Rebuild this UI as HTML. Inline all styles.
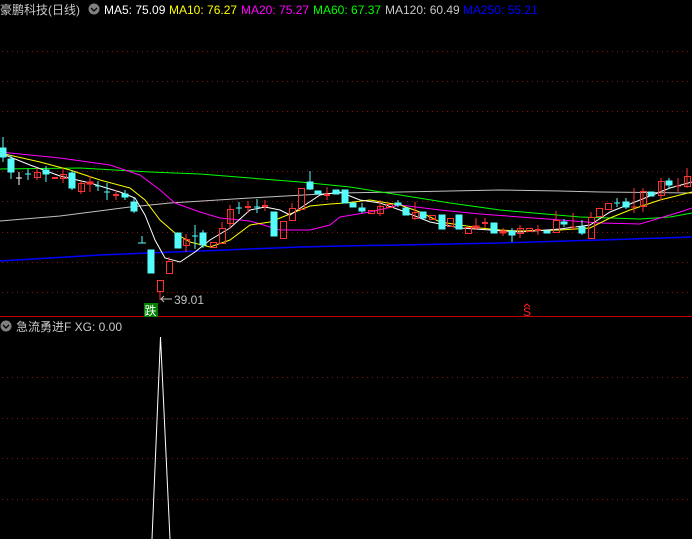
<!DOCTYPE html>
<html><head><meta charset="utf-8"><style>
html,body{margin:0;padding:0;background:#000;width:692px;height:539px;overflow:hidden}
svg{display:block}
text{font-family:"Liberation Sans","Noto Sans CJK SC",sans-serif;font-size:12px}
</style></head><body>
<svg width="692" height="539" xmlns="http://www.w3.org/2000/svg">
<rect width="692" height="539" fill="#000"/>
<g stroke="#8a1010" stroke-width="1" stroke-dasharray="1,4">
<line x1="2" y1="51.5" x2="692" y2="51.5"/><line x1="2" y1="81.5" x2="692" y2="81.5"/>
<line x1="2" y1="111.5" x2="692" y2="111.5"/><line x1="2" y1="141.5" x2="692" y2="141.5"/>
<line x1="2" y1="171.5" x2="692" y2="171.5"/><line x1="2" y1="201.5" x2="692" y2="201.5"/>
<line x1="2" y1="232.5" x2="692" y2="232.5"/><line x1="2" y1="262.5" x2="692" y2="262.5"/>
<line x1="2" y1="292.5" x2="692" y2="292.5"/>
<line x1="2" y1="377.5" x2="692" y2="377.5"/><line x1="2" y1="418.5" x2="692" y2="418.5"/>
<line x1="2" y1="458.5" x2="692" y2="458.5"/><line x1="2" y1="499.5" x2="692" y2="499.5"/>
</g>
<line x1="0" y1="316.5" x2="692" y2="316.5" stroke="#c00000" stroke-width="1"/>
<!-- MAs -->
<g fill="none" stroke-width="1">
<polyline stroke="#c0c0c0" points="0,221 60,216 130,207 170,203 250,198 340,193 400,192 500,190 560,191 600,192 692,193"/>
<polyline stroke="#0000ff" stroke-width="1.5" points="0,261 100,255 200,251 300,247 340,246 400,245 500,243 600,240 692,237"/>
<polyline stroke="#00ff00" points="0,169 80,168 150,172 200,174 300,182 350,187 400,195 450,203 500,210 580,217 640,219 670,217 692,213"/>
<polyline stroke="#ff00ff" points="0,152 60,158 110,165 140,175 160,190 175,203 200,212 220,218 250,221 280,230 310,230 330,225 340,217 370,212 400,205 440,210 480,214 520,217 560,220 600,223 640,224 660,218 680,212 692,208"/>
<polyline stroke="#ffff00" points="0,153 40,162 70,170 100,180 130,188 145,200 160,220 175,233 190,242 210,247 230,240 250,225 270,222 290,214 310,206 330,204 345,203 370,200 400,205 420,212 440,222 460,225 480,228 500,230 520,231 560,230 590,228 610,218 630,210 660,200 692,192"/>
<polyline stroke="#ffffff" points="0,153 30,165 60,176 90,183 120,192 135,198 145,215 155,240 165,258 180,262 195,252 210,240 230,228 250,210 265,207 280,210 290,215 305,205 320,195 340,192 360,200 380,203 400,210 430,222 460,228 490,230 520,232 560,229 590,225 610,212 640,200 670,188 692,182"/>
</g>
<!-- candles: cyan filled, red hollow -->
<g stroke="#54fcfc" fill="#54fcfc" stroke-width="1">
<line x1="3" y1="137" x2="3" y2="162"/><rect x="0" y="148" width="6" height="9"/>
<line x1="11" y1="155" x2="11" y2="179"/><rect x="8" y="159" width="6" height="13"/>
<line x1="28" y1="169" x2="28" y2="180"/><line x1="25" y1="174" x2="31" y2="174"/>
<line x1="46" y1="166" x2="46" y2="182"/><rect x="43" y="170" width="6" height="4"/>
<line x1="72" y1="170" x2="72" y2="190"/><rect x="69" y="173" width="6" height="15"/>
<line x1="98" y1="181" x2="98" y2="191"/><line x1="95" y1="186" x2="101" y2="186"/>
<line x1="107" y1="183" x2="107" y2="200"/><line x1="104" y1="192" x2="110" y2="192"/>
<line x1="125" y1="190" x2="125" y2="200"/><rect x="122" y="194" width="6" height="3"/>
<line x1="134" y1="198" x2="134" y2="213"/><rect x="131" y="202" width="6" height="9"/>
<line x1="142" y1="236" x2="142" y2="243"/><line x1="138" y1="243" x2="146" y2="243"/>
<rect x="148" y="250" width="6" height="23"/>
<rect x="175" y="233" width="6" height="15"/>
<line x1="195" y1="225" x2="195" y2="249"/><line x1="192" y1="236" x2="198" y2="236"/>
<line x1="203" y1="230" x2="203" y2="248"/><rect x="200" y="233" width="6" height="12"/>
<line x1="239" y1="202" x2="239" y2="214"/><line x1="236" y1="208" x2="242" y2="208"/>
<line x1="257" y1="199" x2="257" y2="213"/><line x1="254" y1="207" x2="260" y2="207"/>
<rect x="271" y="212" width="6" height="24"/>
<line x1="310" y1="171" x2="310" y2="190"/><rect x="307" y="182" width="6" height="7"/>
<rect x="315" y="191" width="6" height="3"/>
<rect x="333" y="190" width="6" height="4"/>
<rect x="342" y="190" width="6" height="13"/>
<rect x="350" y="203" width="6" height="4"/>
<line x1="362" y1="203" x2="362" y2="213"/><rect x="359" y="208" width="6" height="3"/>
<line x1="398" y1="200" x2="398" y2="207"/><rect x="395" y="203" width="6" height="2"/>
<rect x="403" y="208" width="6" height="7"/>
<rect x="420" y="212" width="6" height="6"/>
<rect x="439" y="215" width="6" height="14"/>
<rect x="456" y="215" width="6" height="14"/>
<rect x="491" y="223" width="6" height="10"/>
<line x1="512" y1="228" x2="512" y2="242"/><rect x="509" y="231" width="6" height="4"/>
<rect x="544" y="231" width="6" height="2"/>
<line x1="564" y1="219" x2="564" y2="227"/><rect x="561" y="222" width="6" height="2"/>
<line x1="582" y1="220" x2="582" y2="235"/><rect x="579" y="227" width="6" height="6"/>
<line x1="617" y1="198" x2="617" y2="207"/><line x1="614" y1="203" x2="620" y2="203"/>
<line x1="626" y1="198" x2="626" y2="209"/><rect x="623" y="202" width="6" height="5"/>
<rect x="648" y="192" width="6" height="4"/>
<line x1="669" y1="178" x2="669" y2="189"/><rect x="666" y="181" width="6" height="4"/>
</g>
<g stroke="#ff3232" fill="none" stroke-width="1">
<line x1="19" y1="172" x2="19" y2="185" stroke="#fff"/><line x1="16" y1="178" x2="22" y2="178" stroke="#fff"/>
<line x1="37" y1="168" x2="37" y2="180"/><rect x="34.5" y="172.5" width="6" height="5"/>
<line x1="52" y1="178" x2="58" y2="178" stroke-width="2"/>
<line x1="63" y1="168" x2="63" y2="183"/><rect x="60.5" y="174.5" width="6" height="4"/>
<line x1="81" y1="181" x2="81" y2="194"/><rect x="78.5" y="183.5" width="6" height="8"/>
<line x1="90" y1="176" x2="90" y2="192"/><rect x="87" y="182" width="6" height="2" fill="#ff3232"/>
<line x1="116" y1="190" x2="116" y2="200"/><line x1="113" y1="195" x2="119" y2="195" stroke-width="2"/>
<line x1="160" y1="291" x2="160" y2="300"/><rect x="157.5" y="280.5" width="6" height="11"/>
<line x1="169" y1="257" x2="169" y2="262"/><rect x="166.5" y="261.5" width="6" height="12"/>
<line x1="186" y1="234" x2="186" y2="252"/><rect x="183.5" y="239.5" width="6" height="6"/>
<rect x="210.5" y="242.5" width="6" height="5"/>
<line x1="222" y1="222" x2="222" y2="228"/><rect x="219.5" y="228.5" width="6" height="15"/>
<line x1="230" y1="205" x2="230" y2="229"/><rect x="227.5" y="209.5" width="6" height="14"/>
<line x1="248" y1="201" x2="248" y2="213"/><line x1="245" y1="207" x2="251" y2="207" stroke-width="2"/>
<line x1="265" y1="200" x2="265" y2="211"/><line x1="262" y1="206" x2="268" y2="206" stroke-width="2"/>
<rect x="280.5" y="221.5" width="6" height="17"/>
<line x1="292" y1="203" x2="292" y2="208"/><rect x="289.5" y="208.5" width="6" height="12"/>
<rect x="298.5" y="188.5" width="6" height="21"/>
<line x1="327" y1="187" x2="327" y2="200"/><line x1="324" y1="195" x2="330" y2="195" stroke-width="2"/>
<rect x="368.5" y="210.5" width="6" height="3"/>
<line x1="380" y1="200" x2="380" y2="216"/><rect x="377.5" y="206.5" width="6" height="7"/>
<rect x="386.5" y="204.5" width="6" height="3"/>
<line x1="415" y1="202" x2="415" y2="220"/><rect x="412.5" y="212.5" width="6" height="6"/>
<rect x="429.5" y="215.5" width="6" height="4"/>
<rect x="447.5" y="218.5" width="6" height="8"/>
<rect x="465.5" y="227.5" width="6" height="6"/>
<line x1="476" y1="218" x2="476" y2="230"/><rect x="473" y="226" width="6" height="2" fill="#ff3232"/>
<line x1="485" y1="218" x2="485" y2="228"/><line x1="482" y1="223" x2="488" y2="223" stroke-width="2"/>
<line x1="503" y1="228" x2="503" y2="236"/><rect x="500" y="231" width="6" height="2" fill="#ff3232"/>
<line x1="520" y1="225" x2="520" y2="238"/><rect x="517.5" y="228.5" width="6" height="5"/>
<rect x="526.5" y="228.5" width="6" height="3"/>
<line x1="538" y1="225" x2="538" y2="235"/><line x1="535" y1="230" x2="541" y2="230" stroke-width="2"/>
<line x1="556" y1="211" x2="556" y2="220"/><rect x="553.5" y="220.5" width="6" height="12"/>
<line x1="573" y1="213" x2="573" y2="230"/><line x1="570" y1="227" x2="576" y2="227"/>
<line x1="591" y1="212" x2="591" y2="217"/><rect x="588.5" y="217.5" width="6" height="21"/>
<rect x="596.5" y="208.5" width="6" height="8"/>
<rect x="605.5" y="203.5" width="6" height="6"/>
<line x1="634" y1="188" x2="634" y2="213"/><line x1="631" y1="207" x2="637" y2="207"/>
<line x1="643" y1="188" x2="643" y2="212"/><rect x="640.5" y="191.5" width="6" height="15"/>
<line x1="661" y1="178" x2="661" y2="200"/><rect x="658.5" y="181.5" width="6" height="14"/>
<line x1="678" y1="178" x2="678" y2="192"/><line x1="675" y1="186" x2="681" y2="186"/>
<line x1="687" y1="168" x2="687" y2="188"/><rect x="684.5" y="176.5" width="6" height="10"/>
</g>
<!-- low label -->
<g stroke="#c0c0c0" fill="none"><line x1="161" y1="299" x2="172" y2="299"/><polyline points="164,296 161,299 164,302"/></g>
<text x="174" y="304" fill="#c0c0c0">39.01</text>
<rect x="144" y="303" width="14" height="14" fill="#008000"/>
<text x="144.5" y="315" fill="#fff" font-size="13">跌</text>
<text x="523" y="316" fill="#ff2020" font-size="13">S</text>
<polyline points="524,307 527,304 530,307" stroke="#ff2020" fill="none"/>
<!-- header -->
<text x="0" y="14" fill="#c8c8c8" font-size="13">豪鹏科技(日线)</text>
<circle cx="94" cy="9" r="5.5" fill="#808080"/><polyline points="91,8 94,11 97,8" stroke="#000" stroke-width="1.3" fill="none"/>
<text x="104" y="14" fill="#fff">MA5: 75.09</text>
<text x="169" y="14" fill="#ffff00">MA10: 76.27</text>
<text x="241" y="14" fill="#ff00ff">MA20: 75.27</text>
<text x="313" y="14" fill="#00ff00">MA60: 67.37</text>
<text x="385" y="14" fill="#c8c8c8">MA120: 60.49</text>
<text x="463" y="14" fill="#0000ff">MA250: 55.21</text>
<!-- lower panel -->
<circle cx="6" cy="326" r="5.5" fill="#808080"/><polyline points="3,325 6,328 9,325" stroke="#000" stroke-width="1.3" fill="none"/>
<text x="16" y="331" fill="#c8c8c8" font-size="13">急流勇进F  XG: 0.00</text>
<polyline points="152,539 160.5,337 170,539" stroke="#fff" stroke-width="1" fill="none"/>
</svg>
</body></html>
